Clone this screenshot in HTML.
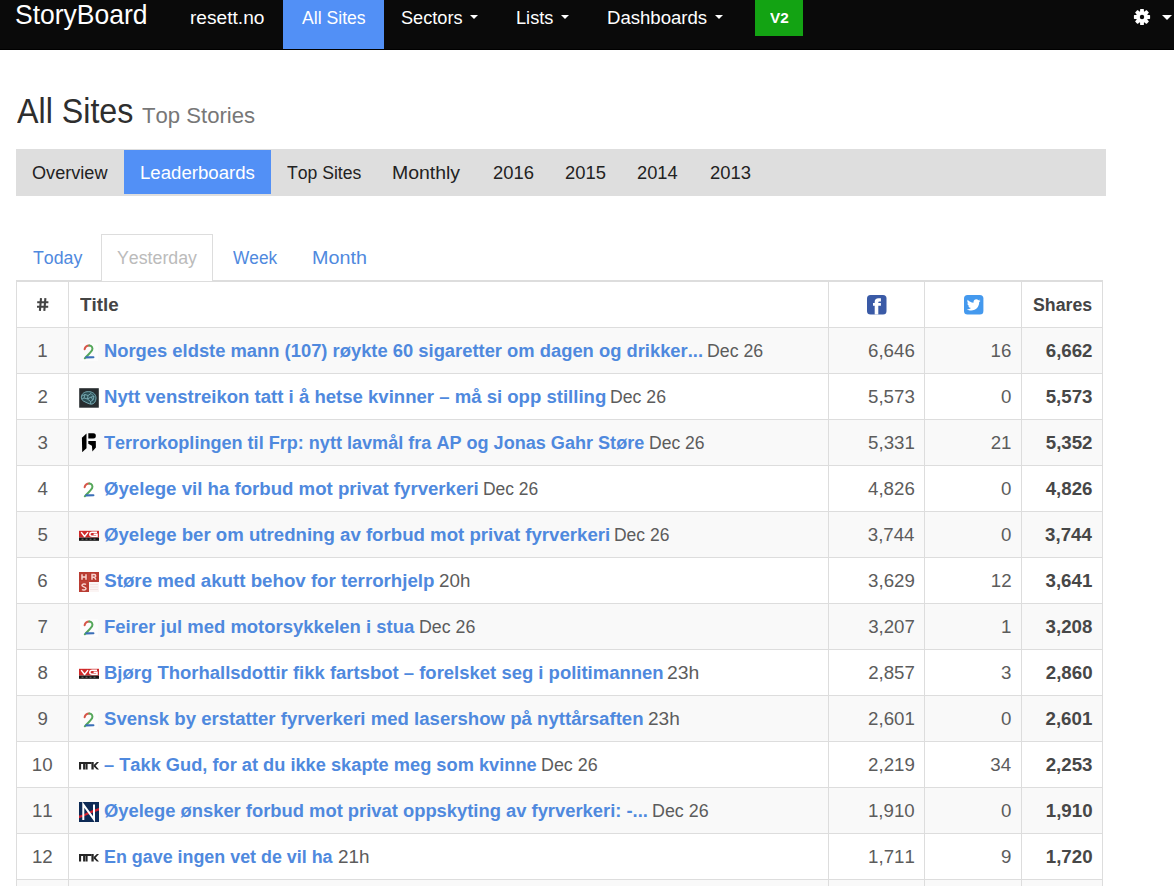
<!DOCTYPE html>
<html><head><meta charset="utf-8"><style>
html,body{margin:0;padding:0;}
body{width:1174px;height:886px;overflow:hidden;position:relative;background:#fff;font-family:"Liberation Sans", sans-serif;}
.t{position:absolute;white-space:nowrap;transform-origin:0 0;font-kerning:none;}
.b{position:absolute;}
</style></head><body>
<div class="b" style="left:0px;top:0px;width:1174px;height:49px;background:#0a0a0a;"></div>
<div class="b" style="left:0px;top:49px;width:1174px;height:1px;background:#000;"></div>
<div class="b" style="left:283px;top:0px;width:101px;height:49px;background:#5290f6;"></div>
<div class="b" style="left:755px;top:0px;width:48px;height:36px;background:#13a313;"></div>
<div class="t" style="left:15.20px;top:-1px;font-size:27.30px;line-height:31px;color:#ffffff;transform:scaleX(0.9703)">StoryBoard</div>
<div class="t" style="left:190.33px;top:7px;font-size:18.70px;line-height:21px;color:#ffffff;transform:scaleX(1.0235)">resett.no</div>
<div class="t" style="left:301.97px;top:7px;font-size:18.70px;line-height:21px;color:#ffffff;transform:scaleX(0.9426)">All Sites</div>
<div class="t" style="left:401.48px;top:7px;font-size:18.70px;line-height:21px;color:#ffffff;transform:scaleX(0.9714)">Sectors</div>
<div class="t" style="left:516.31px;top:7px;font-size:18.70px;line-height:21px;color:#ffffff;transform:scaleX(0.9713)">Lists</div>
<div class="t" style="left:607.08px;top:7px;font-size:18.70px;line-height:21px;color:#ffffff;transform:scaleX(0.9937)">Dashboards</div>
<div class="t" style="left:769.90px;top:10px;font-size:14.20px;line-height:16px;color:#ffffff;font-weight:bold;transform:scaleX(1.0776)">V2</div>
<div class="b" style="left:470.4px;top:15px;width:0;height:0;border-left:4.5px solid transparent;border-right:4.5px solid transparent;border-top:4.8px solid #fff"></div>
<div class="b" style="left:561px;top:15px;width:0;height:0;border-left:4.5px solid transparent;border-right:4.5px solid transparent;border-top:4.8px solid #fff"></div>
<div class="b" style="left:714.8px;top:15px;width:0;height:0;border-left:4.5px solid transparent;border-right:4.5px solid transparent;border-top:4.8px solid #fff"></div>
<div class="b" style="left:1162px;top:15px;width:0;height:0;border-left:5.0px solid transparent;border-right:5.0px solid transparent;border-top:5px solid #fff"></div>
<svg class="b" style="left:1133px;top:8px" width="18" height="18" viewBox="0 0 18 18">
<g fill="#fff" transform="translate(9,9)">
<circle r="6.0"/>
<rect x="-1.9" y="-8.1" width="3.8" height="16.2" rx="0.6"/>
<rect x="-1.9" y="-8.1" width="3.8" height="16.2" rx="0.6" transform="rotate(45)"/>
<rect x="-1.9" y="-8.1" width="3.8" height="16.2" rx="0.6" transform="rotate(90)"/>
<rect x="-1.9" y="-8.1" width="3.8" height="16.2" rx="0.6" transform="rotate(135)"/>
</g><circle cx="9" cy="9" r="2.2" fill="#0a0a0a"/></svg>
<div class="t" style="left:16.54px;top:91px;font-size:34.90px;line-height:39px;color:#2e2e2e;transform:scaleX(0.9235)">All Sites</div>
<div class="t" style="left:142.40px;top:103px;font-size:22.50px;line-height:25px;color:#777777;transform:scaleX(0.9830)">Top Stories</div>
<div class="b" style="left:16px;top:149px;width:1090px;height:47px;background:#dedede;"></div>
<div class="b" style="left:124px;top:150px;width:147px;height:44px;background:#5290f6;"></div>
<div class="t" style="left:32.34px;top:162px;font-size:18.70px;line-height:21px;color:#222222;transform:scaleX(0.9690)">Overview</div>
<div class="t" style="left:139.97px;top:162px;font-size:18.70px;line-height:21px;color:#ffffff;transform:scaleX(0.9956)">Leaderboards</div>
<div class="t" style="left:286.60px;top:162px;font-size:18.70px;line-height:21px;color:#222222;transform:scaleX(0.9410)">Top Sites</div>
<div class="t" style="left:392.40px;top:162px;font-size:18.70px;line-height:21px;color:#222222;transform:scaleX(1.0406)">Monthly</div>
<div class="t" style="left:492.67px;top:162px;font-size:18.70px;line-height:21px;color:#222222;transform:scaleX(0.9840)">2016</div>
<div class="t" style="left:565.08px;top:162px;font-size:18.70px;line-height:21px;color:#222222;transform:scaleX(0.9831)">2015</div>
<div class="t" style="left:637.48px;top:162px;font-size:18.70px;line-height:21px;color:#222222;transform:scaleX(0.9773)">2014</div>
<div class="t" style="left:710.47px;top:162px;font-size:18.70px;line-height:21px;color:#222222;transform:scaleX(0.9840)">2013</div>
<div class="b" style="left:16px;top:280px;width:1087px;height:1px;background:#dddddd;"></div>
<div class="b" style="left:101px;top:234px;width:110px;height:47px;border:1px solid #dddddd;border-bottom:0;background:#fff"></div>
<div class="t" style="left:32.50px;top:247px;font-size:18.70px;line-height:21px;color:#4f89de;transform:scaleX(0.9492)">Today</div>
<div class="t" style="left:117.01px;top:247px;font-size:18.70px;line-height:21px;color:#bbbbbb;transform:scaleX(0.9505)">Yesterday</div>
<div class="t" style="left:232.82px;top:247px;font-size:18.70px;line-height:21px;color:#4f89de;transform:scaleX(0.9237)">Week</div>
<div class="t" style="left:312.18px;top:247px;font-size:18.70px;line-height:21px;color:#4f89de;transform:scaleX(1.0564)">Month</div>
<div class="b" style="left:17px;top:328px;width:1085px;height:45px;background:#f9f9f9;"></div>
<div class="b" style="left:17px;top:420px;width:1085px;height:45px;background:#f9f9f9;"></div>
<div class="b" style="left:17px;top:512px;width:1085px;height:45px;background:#f9f9f9;"></div>
<div class="b" style="left:17px;top:604px;width:1085px;height:45px;background:#f9f9f9;"></div>
<div class="b" style="left:17px;top:696px;width:1085px;height:45px;background:#f9f9f9;"></div>
<div class="b" style="left:17px;top:788px;width:1085px;height:45px;background:#f9f9f9;"></div>
<div class="b" style="left:17px;top:880px;width:1085px;height:6px;background:#f9f9f9;"></div>
<div class="b" style="left:16px;top:281px;width:1087px;height:1px;background:#dddddd;"></div>
<div class="b" style="left:16px;top:281px;width:1px;height:605px;background:#dddddd;"></div>
<div class="b" style="left:1102px;top:281px;width:1px;height:605px;background:#dddddd;"></div>
<div class="b" style="left:68px;top:281px;width:1px;height:605px;background:#dddddd;"></div>
<div class="b" style="left:828px;top:281px;width:1px;height:605px;background:#dddddd;"></div>
<div class="b" style="left:924px;top:281px;width:1px;height:605px;background:#dddddd;"></div>
<div class="b" style="left:1021px;top:281px;width:1px;height:605px;background:#dddddd;"></div>
<div class="b" style="left:16px;top:327px;width:1087px;height:1px;background:#dddddd;"></div>
<svg class="b" style="left:36px;top:297px" width="14" height="15" viewBox="0 0 14 15"><g stroke="#444444" stroke-width="2.1" fill="none"><path d="M5 1.2 L3.9 13.8 M9.4 1.2 L8.3 13.8 M1.2 5.2 H12.4 M1 9.8 H12.2"/></g></svg>
<div class="t" style="left:79.79px;top:294px;font-size:18.70px;line-height:21px;color:#444444;font-weight:bold;transform:scaleX(1.0055)">Title</div>
<div class="t" style="left:1032.89px;top:294px;font-size:18.70px;line-height:21px;color:#444444;font-weight:bold;transform:scaleX(0.9481)">Shares</div>
<svg class="b" style="left:867px;top:295px" width="20" height="20" viewBox="0 0 20 20"><rect x="0" y="0" width="19.5" height="19.5" rx="3.5" fill="#3a5aa6"/>
<path d="M7.7 19.5 V10.8 H6 V7.9 H7.7 V6.8 C7.7 4.4 9 3.2 11.5 3.2 H13.9 V6.4 H12.3 C11.6 6.4 11.3 6.7 11.3 7.3 V7.9 H13.9 V10.8 H11.3 V19.5 Z" fill="#fff"/></svg>
<svg class="b" style="left:963.5px;top:295px" width="20" height="20" viewBox="0 0 20 20"><rect x="0" y="0" width="19.4" height="19.6" rx="3.5" fill="#4499ee"/>
<g transform="translate(9.9,10) scale(1.15) translate(-10.2,-10)"><path d="M16 6.2c-.45.2-.93.33-1.42.39.51-.3.9-.79 1.08-1.37-.48.28-1 .49-1.56.6-.45-.48-1.09-.78-1.8-.78-1.36 0-2.46 1.1-2.46 2.46 0 .19.02.38.06.56-2.05-.1-3.86-1.08-5.07-2.57-.21.36-.33.79-.33 1.24 0 .85.43 1.6 1.1 2.05-.4-.01-.78-.12-1.11-.31v.03c0 1.19.85 2.19 1.98 2.41-.21.06-.43.09-.65.09-.16 0-.31-.02-.46-.04.31.98 1.22 1.69 2.3 1.71-.84.66-1.91 1.05-3.06 1.05-.2 0-.4-.01-.59-.03 1.09.7 2.38 1.1 3.77 1.1 4.52 0 7-3.75 7-7v-.32c.48-.35.9-.78 1.23-1.27z" fill="#fff"/></g></svg>
<div class="b" style="left:16px;top:373px;width:1087px;height:1px;background:#dddddd;"></div>
<div class="t" style="left:37.14px;top:340px;font-size:18.70px;line-height:21px;color:#5c5c5c">1</div>
<svg class="b" style="left:79px;top:342px" width="20" height="20" viewBox="0 0 20 20">
<rect x="1" y="1" width="18" height="18" fill="#fff" opacity="0.5"/>
<path d="M5.6 7.3 C6.1 5.1 7.9 3.7 10.2 3.6" stroke="#d8574a" stroke-width="2" fill="none" stroke-linecap="round"/>
<path d="M10.2 3.6 C12.8 3.8 14.1 5.8 13.1 8.2 C12.3 10.1 8.2 13.4 5.8 16.3" stroke="#55a75a" stroke-width="2" fill="none" stroke-linecap="round"/>
<path d="M7.3 15.4 L14.4 15.2" stroke="#3b6fb8" stroke-width="2.1" fill="none" stroke-linecap="round"/></svg>
<div class="t" style="left:103.77px;top:340px;font-size:18.70px;line-height:21px;color:#4f89de;font-weight:bold;transform:scaleX(0.9826)">Norges eldste mann (107) røykte 60 sigaretter om dagen og drikker...</div>
<div class="t" style="left:706.54px;top:340px;font-size:18.70px;line-height:21px;color:#5c5c5c;transform:scaleX(0.9491)">Dec 26</div>
<div class="t" style="left:868.03px;top:340px;font-size:18.70px;line-height:21px;color:#5c5c5c">6,646</div>
<div class="t" style="left:990.62px;top:340px;font-size:18.70px;line-height:21px;color:#5c5c5c">16</div>
<div class="t" style="left:1045.75px;top:340px;font-size:18.70px;line-height:21px;color:#474747;font-weight:bold">6,662</div>
<div class="b" style="left:16px;top:419px;width:1087px;height:1px;background:#dddddd;"></div>
<div class="t" style="left:37.40px;top:386px;font-size:18.70px;line-height:21px;color:#5c5c5c">2</div>
<svg class="b" style="left:79px;top:388px" width="20" height="20" viewBox="0 0 20 20">
<rect x="0.2" y="0.2" width="19.6" height="19.5" fill="#272c2f"/>
<path d="M2 9 C2.3 5.5 5.5 3 9.5 3.2 C13.5 3.2 17.3 5.5 17.4 10 C17.4 13.8 15.3 16.5 12.2 16.6 C9.5 16.2 6.5 14.5 4 13.2 C2.6 12.2 1.9 10.5 2 9Z" fill="#2f5a63" opacity="0.75"/>
<g stroke="#8bbfc8" stroke-width="0.9" fill="none" opacity="0.85">
<path d="M2.3 9 C2.6 5.8 5.6 3.5 9.5 3.6 C13.3 3.7 16.9 5.8 17 10 C17 13.5 15 16.1 12.2 16.2 C9.5 15.8 6.6 14.2 4.2 12.9 C2.9 12 2.2 10.5 2.3 9Z"/>
<path d="M3 8 L6 6.5 L9 7.5 L12 5.5 M6 6.5 L5 10 L8.5 11 L9 7.5 M8.5 11 L11.5 13.5 L14 12 L15 8.5 L12 5.5 M12 9 L15 8.5 M12 9 L8.5 11 M12 9 L14 12 M3 11 L5 10 M11.5 13.5 L11.8 16"/>
</g></svg>
<div class="t" style="left:104.16px;top:386px;font-size:18.70px;line-height:21px;color:#4f89de;font-weight:bold;transform:scaleX(0.9931)">Nytt venstreikon tatt i å hetse kvinner – må si opp stilling</div>
<div class="t" style="left:610.05px;top:386px;font-size:18.70px;line-height:21px;color:#5c5c5c;transform:scaleX(0.9456)">Dec 26</div>
<div class="t" style="left:868.03px;top:386px;font-size:18.70px;line-height:21px;color:#5c5c5c">5,573</div>
<div class="t" style="left:1000.93px;top:386px;font-size:18.70px;line-height:21px;color:#5c5c5c">0</div>
<div class="t" style="left:1045.68px;top:386px;font-size:18.70px;line-height:21px;color:#474747;font-weight:bold">5,573</div>
<div class="b" style="left:16px;top:465px;width:1087px;height:1px;background:#dddddd;"></div>
<div class="t" style="left:37.45px;top:432px;font-size:18.70px;line-height:21px;color:#5c5c5c">3</div>
<svg class="b" style="left:79px;top:432px" width="20" height="20" viewBox="0 0 20 20">
<path d="M2.9 5.8 L7.5 1.6 L7.5 16.3 L3.2 20.2 Z" fill="#000"/>
<path d="M9.3 1.3 L14.3 1.3 C16.4 1.3 16.8 2.4 16.8 4 C16.8 5.6 16.3 6.5 14.3 6.5 L9.3 6.5 Z" fill="#000"/>
<path d="M9.3 8.9 L16.8 8.9 L16.9 15.6 L13.4 19.6 L12.9 13.8 L9.3 11.8 Z" fill="#000"/></svg>
<div class="t" style="left:103.80px;top:432px;font-size:18.70px;line-height:21px;color:#4f89de;font-weight:bold;transform:scaleX(0.9671)">Terrorkoplingen til Frp: nytt lavmål fra AP og Jonas Gahr Støre</div>
<div class="t" style="left:648.56px;top:432px;font-size:18.70px;line-height:21px;color:#5c5c5c;transform:scaleX(0.9386)">Dec 26</div>
<div class="t" style="left:868.12px;top:432px;font-size:18.70px;line-height:21px;color:#5c5c5c">5,331</div>
<div class="t" style="left:990.71px;top:432px;font-size:18.70px;line-height:21px;color:#5c5c5c">21</div>
<div class="t" style="left:1045.75px;top:432px;font-size:18.70px;line-height:21px;color:#474747;font-weight:bold">5,352</div>
<div class="b" style="left:16px;top:511px;width:1087px;height:1px;background:#dddddd;"></div>
<div class="t" style="left:37.46px;top:478px;font-size:18.70px;line-height:21px;color:#5c5c5c">4</div>
<svg class="b" style="left:79px;top:480px" width="20" height="20" viewBox="0 0 20 20">
<rect x="1" y="1" width="18" height="18" fill="#fff" opacity="0.5"/>
<path d="M5.6 7.3 C6.1 5.1 7.9 3.7 10.2 3.6" stroke="#d8574a" stroke-width="2" fill="none" stroke-linecap="round"/>
<path d="M10.2 3.6 C12.8 3.8 14.1 5.8 13.1 8.2 C12.3 10.1 8.2 13.4 5.8 16.3" stroke="#55a75a" stroke-width="2" fill="none" stroke-linecap="round"/>
<path d="M7.3 15.4 L14.4 15.2" stroke="#3b6fb8" stroke-width="2.1" fill="none" stroke-linecap="round"/></svg>
<div class="t" style="left:104.04px;top:478px;font-size:18.70px;line-height:21px;color:#4f89de;font-weight:bold;transform:scaleX(0.9968)">Øyelege vil ha forbud mot privat fyrverkeri</div>
<div class="t" style="left:483.07px;top:478px;font-size:18.70px;line-height:21px;color:#5c5c5c;transform:scaleX(0.9333)">Dec 26</div>
<div class="t" style="left:868.03px;top:478px;font-size:18.70px;line-height:21px;color:#5c5c5c">4,826</div>
<div class="t" style="left:1000.93px;top:478px;font-size:18.70px;line-height:21px;color:#5c5c5c">0</div>
<div class="t" style="left:1045.68px;top:478px;font-size:18.70px;line-height:21px;color:#474747;font-weight:bold">4,826</div>
<div class="b" style="left:16px;top:557px;width:1087px;height:1px;background:#dddddd;"></div>
<div class="t" style="left:37.42px;top:524px;font-size:18.70px;line-height:21px;color:#5c5c5c">5</div>
<svg class="b" style="left:79px;top:526px" width="20" height="20" viewBox="0 0 20 20">
<rect x="0" y="4.8" width="20" height="6.8" fill="#cf2a2a"/>
<path d="M2.2 6.1 L5.6 10.5 L9 6.1 M18 6.3 L13.2 6.3 C11.4 6.3 10.8 7.2 10.8 8.3 C10.8 9.5 11.4 10.3 13.2 10.3 L18 10.3 L18 8.3 L14.6 8.3" stroke="#fff" stroke-width="1.5" fill="none"/>
<rect x="0" y="11.6" width="20" height="3.2" fill="#151515"/>
<g fill="#777"><rect x="2.5" y="12.7" width="2" height="1"/><rect x="6.5" y="12.7" width="2" height="1"/><rect x="10.5" y="12.7" width="2" height="1"/><rect x="14.5" y="12.7" width="2" height="1"/></g></svg>
<div class="t" style="left:104.04px;top:524px;font-size:18.70px;line-height:21px;color:#4f89de;font-weight:bold;transform:scaleX(0.9969)">Øyelege ber om utredning av forbud mot privat fyrverkeri</div>
<div class="t" style="left:613.87px;top:524px;font-size:18.70px;line-height:21px;color:#5c5c5c;transform:scaleX(0.9351)">Dec 26</div>
<div class="t" style="left:867.75px;top:524px;font-size:18.70px;line-height:21px;color:#5c5c5c">3,744</div>
<div class="t" style="left:1000.93px;top:524px;font-size:18.70px;line-height:21px;color:#5c5c5c">0</div>
<div class="t" style="left:1045.10px;top:524px;font-size:18.70px;line-height:21px;color:#474747;font-weight:bold">3,744</div>
<div class="b" style="left:16px;top:603px;width:1087px;height:1px;background:#dddddd;"></div>
<div class="t" style="left:37.34px;top:570px;font-size:18.70px;line-height:21px;color:#5c5c5c">6</div>
<svg class="b" style="left:79px;top:572px" width="20" height="20" viewBox="0 0 20 20">
<rect x="0" y="0" width="20" height="10" fill="#b93c32"/>
<rect x="0" y="10" width="10" height="10" fill="#b93c32"/>
<rect x="10" y="10" width="10" height="10" fill="#fbf4f3"/>
<g stroke="#d2574d" stroke-width="0.6" opacity="0.8"><path d="M10 0.3 V10 M0.3 10 H10"/></g>
<g stroke="#f2e2e0" stroke-width="0.9"><path d="M11 12.5 H19 M11 15 H19 M11 17.5 H19"/></g>
<g stroke="#f9d3cf" stroke-width="1.5" fill="none">
<path d="M3 2.3 V7.7 M7 2.3 V7.7 M3 5 H7"/>
<path d="M13 7.7 V2.6 H15.4 C17.1 2.6 17.1 5.2 15.4 5.2 H13 M15.3 5.2 L17 7.7"/>
<path d="M7 12.5 C6 11.8 3 11.8 3 13.6 C3 15 7 14.8 7 16.5 C7 18.3 4 18.3 3 17.5"/>
</g></svg>
<div class="t" style="left:104.26px;top:570px;font-size:18.70px;line-height:21px;color:#4f89de;font-weight:bold">Støre med akutt behov for terrorhjelp</div>
<div class="t" style="left:439.35px;top:570px;font-size:18.70px;line-height:21px;color:#5c5c5c;transform:scaleX(1.0053)">20h</div>
<div class="t" style="left:868.09px;top:570px;font-size:18.70px;line-height:21px;color:#5c5c5c">3,629</div>
<div class="t" style="left:990.74px;top:570px;font-size:18.70px;line-height:21px;color:#5c5c5c">12</div>
<div class="t" style="left:1045.52px;top:570px;font-size:18.70px;line-height:21px;color:#474747;font-weight:bold">3,641</div>
<div class="b" style="left:16px;top:649px;width:1087px;height:1px;background:#dddddd;"></div>
<div class="t" style="left:37.39px;top:616px;font-size:18.70px;line-height:21px;color:#5c5c5c">7</div>
<svg class="b" style="left:79px;top:618px" width="20" height="20" viewBox="0 0 20 20">
<rect x="1" y="1" width="18" height="18" fill="#fff" opacity="0.5"/>
<path d="M5.6 7.3 C6.1 5.1 7.9 3.7 10.2 3.6" stroke="#d8574a" stroke-width="2" fill="none" stroke-linecap="round"/>
<path d="M10.2 3.6 C12.8 3.8 14.1 5.8 13.1 8.2 C12.3 10.1 8.2 13.4 5.8 16.3" stroke="#55a75a" stroke-width="2" fill="none" stroke-linecap="round"/>
<path d="M7.3 15.4 L14.4 15.2" stroke="#3b6fb8" stroke-width="2.1" fill="none" stroke-linecap="round"/></svg>
<div class="t" style="left:103.56px;top:616px;font-size:18.70px;line-height:21px;color:#4f89de;font-weight:bold;transform:scaleX(0.9894)">Feirer jul med motorsykkelen i stua</div>
<div class="t" style="left:418.54px;top:616px;font-size:18.70px;line-height:21px;color:#5c5c5c;transform:scaleX(0.9509)">Dec 26</div>
<div class="t" style="left:868.14px;top:616px;font-size:18.70px;line-height:21px;color:#5c5c5c">3,207</div>
<div class="t" style="left:1001.11px;top:616px;font-size:18.70px;line-height:21px;color:#5c5c5c">1</div>
<div class="t" style="left:1045.58px;top:616px;font-size:18.70px;line-height:21px;color:#474747;font-weight:bold">3,208</div>
<div class="b" style="left:16px;top:695px;width:1087px;height:1px;background:#dddddd;"></div>
<div class="t" style="left:37.40px;top:662px;font-size:18.70px;line-height:21px;color:#5c5c5c">8</div>
<svg class="b" style="left:79px;top:664px" width="20" height="20" viewBox="0 0 20 20">
<rect x="0" y="4.8" width="20" height="6.8" fill="#cf2a2a"/>
<path d="M2.2 6.1 L5.6 10.5 L9 6.1 M18 6.3 L13.2 6.3 C11.4 6.3 10.8 7.2 10.8 8.3 C10.8 9.5 11.4 10.3 13.2 10.3 L18 10.3 L18 8.3 L14.6 8.3" stroke="#fff" stroke-width="1.5" fill="none"/>
<rect x="0" y="11.6" width="20" height="3.2" fill="#151515"/>
<g fill="#777"><rect x="2.5" y="12.7" width="2" height="1"/><rect x="6.5" y="12.7" width="2" height="1"/><rect x="10.5" y="12.7" width="2" height="1"/><rect x="14.5" y="12.7" width="2" height="1"/></g></svg>
<div class="t" style="left:103.56px;top:662px;font-size:18.70px;line-height:21px;color:#4f89de;font-weight:bold;transform:scaleX(0.9889)">Bjørg Thorhallsdottir fikk fartsbot – forelsket seg i politimannen</div>
<div class="t" style="left:666.63px;top:662px;font-size:18.70px;line-height:21px;color:#5c5c5c;transform:scaleX(1.0363)">23h</div>
<div class="t" style="left:868.14px;top:662px;font-size:18.70px;line-height:21px;color:#5c5c5c">2,857</div>
<div class="t" style="left:1001.02px;top:662px;font-size:18.70px;line-height:21px;color:#5c5c5c">3</div>
<div class="t" style="left:1045.77px;top:662px;font-size:18.70px;line-height:21px;color:#474747;font-weight:bold">2,860</div>
<div class="b" style="left:16px;top:741px;width:1087px;height:1px;background:#dddddd;"></div>
<div class="t" style="left:37.40px;top:708px;font-size:18.70px;line-height:21px;color:#5c5c5c">9</div>
<svg class="b" style="left:79px;top:710px" width="20" height="20" viewBox="0 0 20 20">
<rect x="1" y="1" width="18" height="18" fill="#fff" opacity="0.5"/>
<path d="M5.6 7.3 C6.1 5.1 7.9 3.7 10.2 3.6" stroke="#d8574a" stroke-width="2" fill="none" stroke-linecap="round"/>
<path d="M10.2 3.6 C12.8 3.8 14.1 5.8 13.1 8.2 C12.3 10.1 8.2 13.4 5.8 16.3" stroke="#55a75a" stroke-width="2" fill="none" stroke-linecap="round"/>
<path d="M7.3 15.4 L14.4 15.2" stroke="#3b6fb8" stroke-width="2.1" fill="none" stroke-linecap="round"/></svg>
<div class="t" style="left:104.26px;top:708px;font-size:18.70px;line-height:21px;color:#4f89de;font-weight:bold;transform:scaleX(0.9951)">Svensk by erstatter fyrverkeri med lasershow på nyttårsaften</div>
<div class="t" style="left:647.74px;top:708px;font-size:18.70px;line-height:21px;color:#5c5c5c;transform:scaleX(1.0191)">23h</div>
<div class="t" style="left:868.12px;top:708px;font-size:18.70px;line-height:21px;color:#5c5c5c">2,601</div>
<div class="t" style="left:1000.93px;top:708px;font-size:18.70px;line-height:21px;color:#5c5c5c">0</div>
<div class="t" style="left:1045.52px;top:708px;font-size:18.70px;line-height:21px;color:#474747;font-weight:bold">2,601</div>
<div class="b" style="left:16px;top:787px;width:1087px;height:1px;background:#dddddd;"></div>
<div class="t" style="left:31.85px;top:754px;font-size:18.70px;line-height:21px;color:#5c5c5c">10</div>
<svg class="b" style="left:79px;top:756px" width="20" height="20" viewBox="0 0 20 20">
<g fill="#262626">
<rect x="0" y="6" width="2.1" height="7.5"/>
<rect x="0" y="6" width="12.6" height="2"/>
<rect x="4.1" y="6" width="2.1" height="7.5"/>
<rect x="6.5" y="6" width="2.1" height="7.5"/>
<rect x="12.4" y="6" width="2.3" height="7.5"/>
<path d="M14.7 9.1 L17.9 6 L20 6 L16.6 9.7 L20 13.5 L17.9 13.5 L14.7 10.4 Z"/>
</g></svg>
<div class="t" style="left:103.75px;top:754px;font-size:18.70px;line-height:21px;color:#4f89de;font-weight:bold;transform:scaleX(0.9757)">– Takk Gud, for at du ikke skapte meg som kvinne</div>
<div class="t" style="left:541.13px;top:754px;font-size:18.70px;line-height:21px;color:#5c5c5c;transform:scaleX(0.9562)">Dec 26</div>
<div class="t" style="left:868.09px;top:754px;font-size:18.70px;line-height:21px;color:#5c5c5c">2,219</div>
<div class="t" style="left:990.35px;top:754px;font-size:18.70px;line-height:21px;color:#5c5c5c">34</div>
<div class="t" style="left:1045.68px;top:754px;font-size:18.70px;line-height:21px;color:#474747;font-weight:bold">2,253</div>
<div class="b" style="left:16px;top:833px;width:1087px;height:1px;background:#dddddd;"></div>
<div class="t" style="left:31.94px;top:800px;font-size:18.70px;line-height:21px;color:#5c5c5c">11</div>
<svg class="b" style="left:79px;top:802px" width="20" height="20" viewBox="0 0 20 20">
<rect width="20" height="20" fill="#0d2a55"/>
<path d="M0 13.6 C5 12.8 10 9 20 6 L20 8.6 C10 11.6 5 15.2 0 16.2 Z" fill="#d3212d"/>
<path d="M4.3 18 V2.6 L15 17.4 V2.6" stroke="#fff" stroke-width="2" fill="none"/></svg>
<div class="t" style="left:104.05px;top:800px;font-size:18.70px;line-height:21px;color:#4f89de;font-weight:bold;transform:scaleX(0.9826)">Øyelege ønsker forbud mot privat oppskyting av fyrverkeri: -...</div>
<div class="t" style="left:652.03px;top:800px;font-size:18.70px;line-height:21px;color:#5c5c5c;transform:scaleX(0.9562)">Dec 26</div>
<div class="t" style="left:867.93px;top:800px;font-size:18.70px;line-height:21px;color:#5c5c5c">1,910</div>
<div class="t" style="left:1000.93px;top:800px;font-size:18.70px;line-height:21px;color:#5c5c5c">0</div>
<div class="t" style="left:1045.77px;top:800px;font-size:18.70px;line-height:21px;color:#474747;font-weight:bold">1,910</div>
<div class="b" style="left:16px;top:879px;width:1087px;height:1px;background:#dddddd;"></div>
<div class="t" style="left:31.96px;top:846px;font-size:18.70px;line-height:21px;color:#5c5c5c">12</div>
<svg class="b" style="left:79px;top:848px" width="20" height="20" viewBox="0 0 20 20">
<g fill="#262626">
<rect x="0" y="6" width="2.1" height="7.5"/>
<rect x="0" y="6" width="12.6" height="2"/>
<rect x="4.1" y="6" width="2.1" height="7.5"/>
<rect x="6.5" y="6" width="2.1" height="7.5"/>
<rect x="12.4" y="6" width="2.3" height="7.5"/>
<path d="M14.7 9.1 L17.9 6 L20 6 L16.6 9.7 L20 13.5 L17.9 13.5 L14.7 10.4 Z"/>
</g></svg>
<div class="t" style="left:104.10px;top:846px;font-size:18.70px;line-height:21px;color:#4f89de;font-weight:bold;transform:scaleX(0.9568)">En gave ingen vet de vil ha</div>
<div class="t" style="left:337.65px;top:846px;font-size:18.70px;line-height:21px;color:#5c5c5c;transform:scaleX(1.0122)">21h</div>
<div class="t" style="left:868.12px;top:846px;font-size:18.70px;line-height:21px;color:#5c5c5c">1,711</div>
<div class="t" style="left:1001.09px;top:846px;font-size:18.70px;line-height:21px;color:#5c5c5c">9</div>
<div class="t" style="left:1045.77px;top:846px;font-size:18.70px;line-height:21px;color:#474747;font-weight:bold">1,720</div>
</body></html>
